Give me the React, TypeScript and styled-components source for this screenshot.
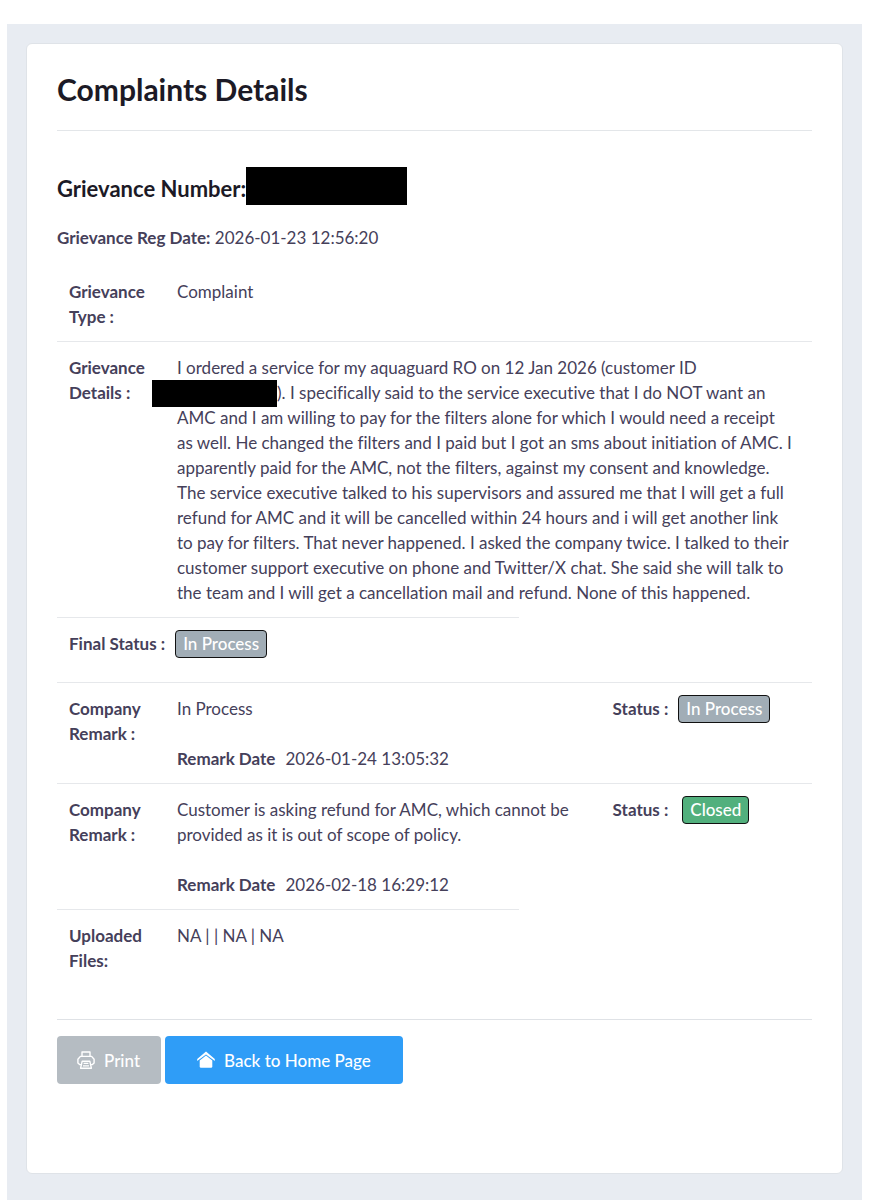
import React from "react";
import styled, { createGlobalStyle } from "styled-components";

const GlobalStyle = createGlobalStyle`
  *, *::before, *::after { box-sizing: border-box; }
  body {
    margin: 0;
    background: #fff;
    color: #45405a;
    font-family: Lato, "Liberation Sans", sans-serif;
    font-size: 17px;
    font-variant-ligatures: none;
    line-height: 25px;
  }
`;

const Page = styled.main`
  min-height: 100vh;
  display: flex;
  flex-direction: column;
  padding: 24px 20px 0 7px;
`;

const Backdrop = styled.div`
  flex: 1;
  padding: 19px 19px 26px;
  background: #e8ecf2;
`;

const Card = styled.section`
  padding: 28px 30px 89px;
  background: #fff;
  border: 1px solid #dfe3e8;
  border-radius: 6px;
`;

const Title = styled.h1`
  margin: 0;
  padding-bottom: 23px;
  border-bottom: 1px solid #e3e6e9;
  color: #1c1a26;
  font-size: 30px;
  line-height: 35px;
  font-weight: 700;
`;

const NumberLine = styled.h2`
  display: flex;
  align-items: flex-end;
  margin: 36px 0 20px;
  color: #1c1a26;
  font-size: 22px;
  line-height: 32px;
  font-weight: 700;
`;

const NumberMask = styled.span`
  width: 161px;
  height: 38px;
  background: #000;
`;

const DateLine = styled.p`
  margin: 0 0 17px;
`;

const Table = styled.table`
  width: 100%;
  table-layout: fixed;
  border-collapse: separate;
  border-spacing: 0;
`;

const Column = styled.col<{ $width: string }>`
  width: ${(p) => p.$width};
`;

const Label = styled.th`
  padding: 12px;
  text-align: left;
  vertical-align: top;
  font-weight: 700;
`;

const Cell = styled.td`
  padding: 12px 18px 12px 12px;
  vertical-align: top;
`;

const StatusCell = styled(Cell)<{ $tall?: boolean }>`
  padding-bottom: ${(p) => (p.$tall ? "26px" : "12px")};
  white-space: nowrap;
`;

const Row = styled.tr`
  & + & > * {
    padding-top: 13px;
    border-top: 1px solid #e6e8eb;
  }
`;

const StatusLine = styled.div<{ $gap: number }>`
  display: flex;
  align-items: center;
  gap: ${(p) => p.$gap}px;
  height: 25px;
  font-weight: 700;
`;

const Badge = styled.span<{ $tone: string }>`
  padding: 0 7px;
  height: 28px;
  border: 1px solid #111;
  border-radius: 4px;
  background: ${(p) => p.$tone};
  color: #fff;
  font-weight: 500;
`;

const CustomerId = styled.span`
  position: relative;
  display: inline-block;
  width: 100px;

  &::before {
    content: "";
    position: absolute;
    right: 0;
    bottom: -8px;
    width: 125px;
    height: 27px;
    background: #000;
  }
`;

const Remark = styled.p`
  margin: 0 0 25px;
`;

const RemarkDate = styled.div`
  display: flex;
  gap: 10px;
`;

const Actions = styled.footer`
  display: flex;
  gap: 4px;
  margin-top: 34px;
  padding-top: 16px;
  border-top: 1px solid #dfe2e6;
`;

const actionStyle = `
  display: flex;
  align-items: center;
  justify-content: center;
  gap: 9px;
  height: 48px;
  border: 0;
  border-radius: 4px;
  color: #fff;
  font: inherit;
  font-weight: 500;
  font-variant-ligatures: none;
  text-decoration: none;
`;

const PrintButton = styled.button`
  ${actionStyle}
  padding: 0 21px 0 20px;
  background: #b5bcc2;
`;

const HomeLink = styled.a`
  ${actionStyle}
  padding: 0 32px;
  background: #2f9df7;
`;

const PrinterIcon = () => (
  <svg width="18" height="18" viewBox="0 0 18 18" fill="none" stroke="currentColor" strokeWidth="1.4" strokeLinejoin="round" aria-hidden="true">
    <path d="M5 5.2V1h8v4.2" />
    <path d="M4 13.6H2.6L.9 12V8.2L3.4 5.4h11.2l2.5 2.8V12l-1.7 1.6H14" />
    <path d="M5.2 10.2h7.6l1.6 7H3.6z" />
    <path d="M6.6 12.4h4.8M6 14.8h6" strokeWidth="1.2" />
  </svg>
);

const HomeIcon = () => (
  <svg width="18" height="18" viewBox="0 0 18 18" fill="currentColor" aria-hidden="true">
    <path d="M9 .6 17.8 8v2.1L9 3.4.2 10.1V8z" />
    <path d="M9 4.6l6.3 4.9v6q0 1.3-1.3 1.3H4q-1.3 0-1.3-1.3v-6z" />
  </svg>
);

const GREY = "#a1adb6";
const GREEN = "#52b07d";

type CompanyRemarkProps = { text: string; date: string; status: string; tone: string; gap: number };

const CompanyRemark = ({ text, date, status, tone, gap }: CompanyRemarkProps) => (
  <Row>
    <Label scope="row">Company Remark :</Label>
    <Cell colSpan={2}>
      <Remark>{text}</Remark>
      <RemarkDate>
        <strong>Remark Date</strong>
        <span>{date}</span>
      </RemarkDate>
    </Cell>
    <StatusCell>
      <StatusLine $gap={gap}>
        Status : <Badge $tone={tone}>{status}</Badge>
      </StatusLine>
    </StatusCell>
  </Row>
);

export default function App() {
  return (
    <>
      <GlobalStyle />
      <Page>
        <Backdrop>
          <Card>
            <Title>Complaints Details</Title>
            <NumberLine>
              Grievance Number: <NumberMask />
            </NumberLine>
            <DateLine>
              <strong>Grievance Reg Date:</strong> 2026-01-23 12:56:20
            </DateLine>
            <Table>
              <colgroup>
                <Column $width="108px" />
                <Column $width="auto" />
                <Column $width="82px" />
                <Column $width="28%" />
              </colgroup>
              <tbody>
                <Row>
                  <Label scope="row">Grievance Type :</Label>
                  <Cell colSpan={3}>Complaint</Cell>
                </Row>
                <Row>
                  <Label scope="row">Grievance Details :</Label>
                  <Cell colSpan={3}>
                    I ordered a service for my aquaguard RO on 12 Jan 2026 (customer ID <CustomerId />
                    ). I specifically said to the service executive that I do NOT want an AMC and I am
                    willing to pay for the filters alone for which I would need a receipt as well. He
                    changed the filters and I paid but I got an sms about initiation of AMC. I
                    apparently paid for the AMC, not the filters, against my consent and knowledge. The
                    service executive talked to his supervisors and assured me that I will get a full
                    refund for AMC and it will be cancelled within 24 hours and i will get another link
                    to pay for filters. That never happened. I asked the company twice. I talked to
                    their customer support executive on phone and Twitter/X chat. She said she will talk
                    to the team and I will get a cancellation mail and refund. None of this happened.
                  </Cell>
                </Row>
                <Row>
                  <StatusCell colSpan={2} $tall>
                    <StatusLine $gap={10}>
                      Final Status : <Badge $tone={GREY}>In Process</Badge>
                    </StatusLine>
                  </StatusCell>
                </Row>
                <CompanyRemark
                  text="In Process"
                  date="2026-01-24 13:05:32"
                  status="In Process"
                  tone={GREY}
                  gap={10}
                />
                <CompanyRemark
                  text="Customer is asking refund for AMC, which cannot be provided as it is out of scope of policy."
                  date="2026-02-18 16:29:12"
                  status="Closed"
                  tone={GREEN}
                  gap={14}
                />
                <Row>
                  <Label scope="row">Uploaded Files:</Label>
                  <Cell>NA | | NA | NA</Cell>
                </Row>
              </tbody>
            </Table>
            <Actions>
              <PrintButton type="button">
                <PrinterIcon />
                Print
              </PrintButton>
              <HomeLink href="#home">
                <HomeIcon />
                Back to Home Page
              </HomeLink>
            </Actions>
          </Card>
        </Backdrop>
      </Page>
    </>
  );
}
